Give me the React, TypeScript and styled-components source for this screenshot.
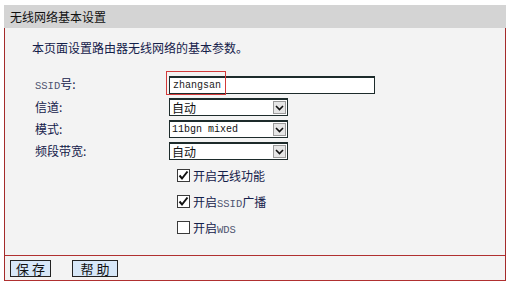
import React from "react";
import styled, { createGlobalStyle } from "styled-components";

const GlobalStyle = createGlobalStyle`
  body {
    margin: 0;
    background: #ffffff;
    font-family: "Noto Sans CJK SC", "Noto Sans", sans-serif;
    font-size: 12px;
  }
`;

const Frame = styled.div`
  width: 502px;
  margin: 5px 0 0 4px;
`;

const Header = styled.div`
  height: 23px;
  background: #d4d4d4;
  display: flex;
  align-items: center;
  padding-left: 6px;
  color: #111;
  font-size: 12px;
`;

const Panel = styled.div`
  background: #f3f3f3;
  border-left: 1px solid #a42a2a;
  border-right: 1px solid #a42a2a;
  border-bottom: 1px solid #b03030;
`;

const Content = styled.div`
  height: 227px;
  padding: 13px 0 0 27px;
  box-sizing: border-box;
`;

const Intro = styled.div`
  line-height: 14px;
  color: #14204a;
  margin-bottom: 19px;
`;

const Form = styled.div`
  display: grid;
  grid-template-columns: 134px auto;
  grid-auto-rows: 22px;
  align-items: center;
  padding-left: 3px;
`;

const Label = styled.div`
  color: #14204a;
  line-height: 14px;
`;

const Latin = styled.span`
  font-family: "Liberation Mono", monospace;
  font-size: 10.5px;
  color: #4e5470;
`;

const Field = styled.div`
  position: relative;
  display: flex;
`;

const TextInput = styled.div`
  width: 206px;
  height: 18px;
  box-sizing: border-box;
  border: 1px solid #1d2b2b;
  border-top-width: 2px;
  background: #fff;
  font-family: "Liberation Mono", monospace;
  font-size: 10px;
  color: #222;
  display: flex;
  align-items: center;
  padding-left: 3px;
`;

const Highlight = styled.div`
  position: absolute;
  left: -3px;
  top: -5px;
  width: 60px;
  height: 24px;
  border: 1px solid #d23a3a;
  box-sizing: border-box;
`;

const SelectBox = styled.div`
  width: 119px;
  height: 18px;
  box-sizing: border-box;
  border: 1px solid #1d2b2b;
  border-top-width: 2px;
  background: #fff;
  display: flex;
  align-items: center;
  justify-content: space-between;
`;

const SelectValue = styled.span<{ $mono?: boolean }>`
  padding-left: 2px;
  font-family: ${(p) =>
    p.$mono ? `"Liberation Mono", monospace` : `"Noto Sans CJK SC", sans-serif`};
  font-size: ${(p) => (p.$mono ? "10px" : "12px")};
  color: #111;
  line-height: 14px;
`;

const ArrowBtn = styled.span`
  width: 13px;
  height: 13px;
  margin-right: 1px;
  background: #e6e6e6;
  border: 1px solid #9a9a9a;
  box-sizing: border-box;
  display: flex;
  align-items: center;
  justify-content: center;
`;

const CheckRows = styled.div`
  display: grid;
  grid-auto-rows: 26px;
  align-items: center;
  padding-left: 145px;
`;

const CheckRow = styled.div`
  display: flex;
  align-items: center;
  gap: 3px;
  color: #14204a;
`;

const Box = styled.span`
  width: 13px;
  height: 13px;
  box-sizing: border-box;
  border: 1px solid #3a3a3a;
  background: #fff;
  display: flex;
  align-items: center;
  justify-content: center;
`;

const Footer = styled.div`
  border-top: 1px solid #b03030;
  height: 25px;
  box-sizing: border-box;
  display: flex;
  align-items: center;
  padding-left: 5px;
  gap: 21px;
`;

const Button = styled.button<{ $w: number }>`
  width: ${(p) => p.$w}px;
  height: 17px;
  padding: 0;
  border: 1px solid #222;
  background: #d7e7f8;
  font-family: "Noto Sans CJK SC", sans-serif;
  font-size: 13px;
  line-height: 15px;
  color: #111;
  letter-spacing: 3px;
  text-indent: 3px;
`;

const Chevron = () => (
  <svg width="9" height="6" viewBox="0 0 9 6">
    <path d="M1 1 L4.5 4.5 L8 1" fill="none" stroke="#111" strokeWidth="1.6" />
  </svg>
);

const Check = ({ on }: { on: boolean }) => (
  <Box>
    {on && (
      <svg width="11" height="11" viewBox="0 0 11 11">
        <path d="M1.5 5.5 L4 8.5 L9.5 1.5" fill="none" stroke="#111" strokeWidth="2" />
      </svg>
    )}
  </Box>
);

const Select = ({ value, mono }: { value: string; mono?: boolean }) => (
  <SelectBox>
    <SelectValue $mono={mono}>{value}</SelectValue>
    <ArrowBtn>
      <Chevron />
    </ArrowBtn>
  </SelectBox>
);

const App: React.FC = () => {
  return (
    <>
      <GlobalStyle />
      <Frame>
        <Header>无线网络基本设置</Header>
        <Panel>
          <Content>
            <Intro>本页面设置路由器无线网络的基本参数。</Intro>
            <Form>
              <Label>
                <Latin>SSID</Latin>号:
              </Label>
              <Field>
                <TextInput>zhangsan</TextInput>
                <Highlight />
              </Field>
              <Label>信道:</Label>
              <Field>
                <Select value="自动" />
              </Field>
              <Label>模式:</Label>
              <Field>
                <Select value="11bgn mixed" mono />
              </Field>
              <Label>频段带宽:</Label>
              <Field>
                <Select value="自动" />
              </Field>
            </Form>
            <CheckRows>
              <CheckRow>
                <Check on />
                开启无线功能
              </CheckRow>
              <CheckRow>
                <Check on />
                <span>
                  开启<Latin>SSID</Latin>广播
                </span>
              </CheckRow>
              <CheckRow>
                <Check on={false} />
                <span>
                  开启<Latin>WDS</Latin>
                </span>
              </CheckRow>
            </CheckRows>
          </Content>
          <Footer>
            <Button $w={41}>保存</Button>
            <Button $w={46}>帮助</Button>
          </Footer>
        </Panel>
      </Frame>
    </>
  );
};

export default App;
